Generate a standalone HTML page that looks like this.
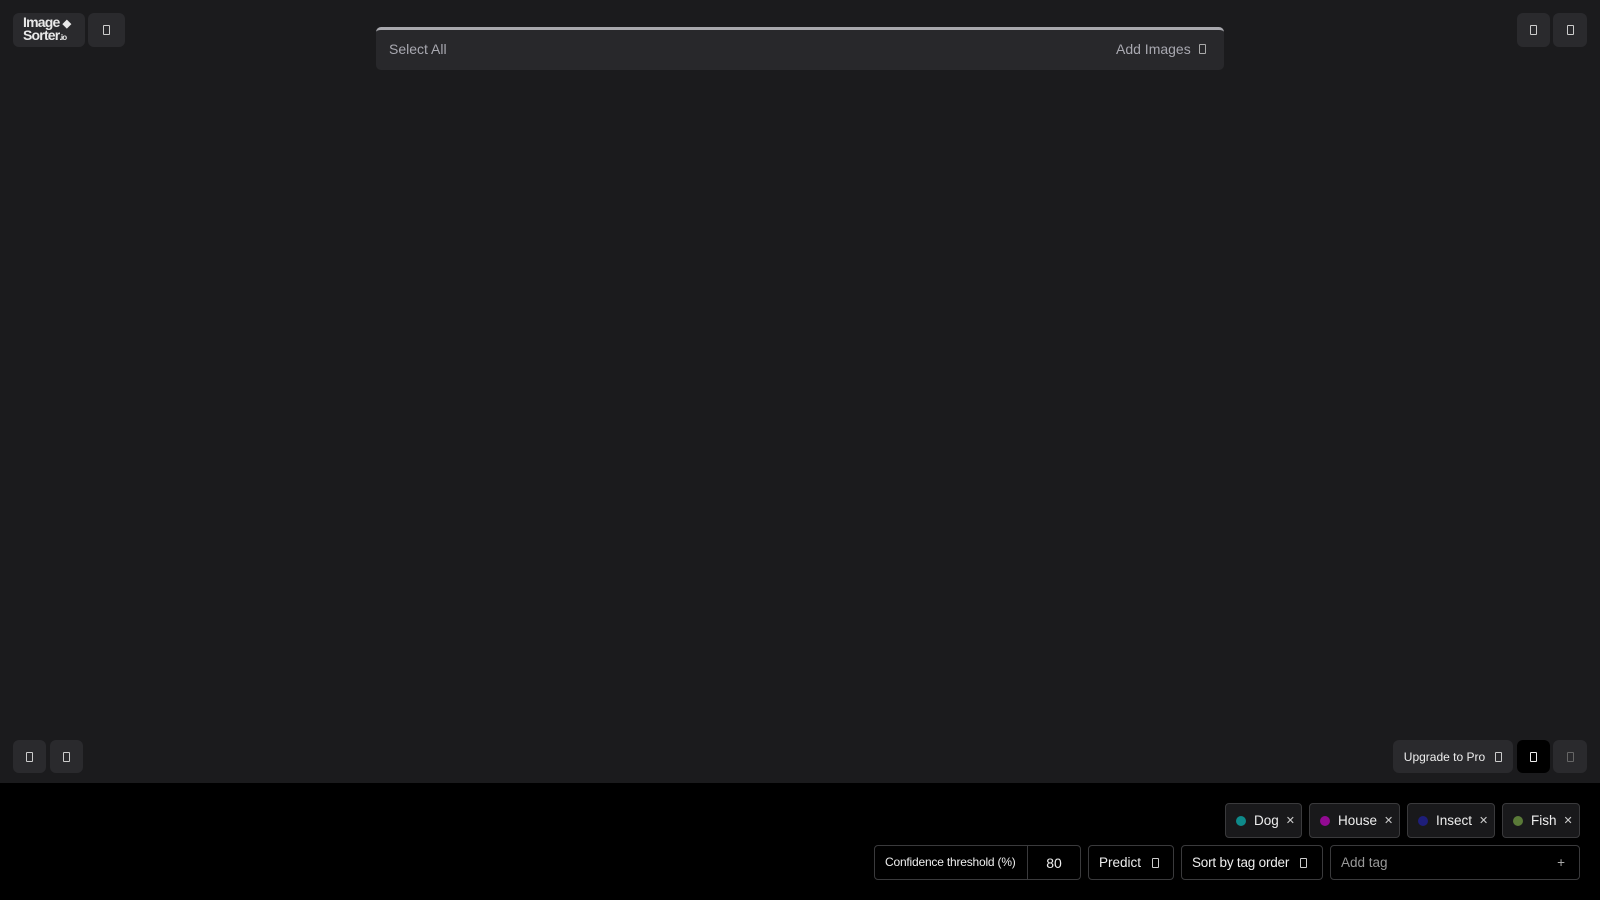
<!DOCTYPE html><html><head><style>
*{box-sizing:border-box;margin:0;padding:0}
body{width:1600px;height:900px;background:#000;font-family:"Liberation Sans",sans-serif;position:relative;overflow:hidden}
.main{position:absolute;left:0;top:0;width:1600px;height:783px;background:#1b1b1d}
.a{position:absolute}
.btn{position:absolute;background:#2a2a2d;border-radius:6px;display:flex;align-items:center;justify-content:center}
.ic{display:inline-block;width:7px;height:10px;border:1px solid #ccc;border-radius:1px}
.box{position:absolute;border:1px solid #3a3a3c;border-radius:4px;background:#000;color:#eee;display:flex;align-items:center;font-size:13.5px}
.tag{background:#19191b;padding-left:10px}
.dot{width:10px;height:10px;border-radius:50%;margin-right:8px}
.x{margin-left:7px;font-size:11px;color:#ccc}
</style></head><body>
<div class="main">
<div class="btn" style="left:13px;top:13px;width:72px;height:34px;color:#e8e8e8;font-weight:bold;font-size:14px;line-height:11px;flex-direction:column;letter-spacing:-0.8px;align-items:flex-start;padding-left:10px"><div>Image <span style="font-size:11px">◆</span></div><div>Sorter<span style="font-size:8px">.io</span></div></div>
<div class="btn" style="left:88px;top:13px;width:37px;height:34px"><span class="ic"></span></div>
<div class="a" style="left:376px;top:27px;width:848px;height:43px;background:#28282b;border-top:3px solid #a8a8ad;border-radius:5px"></div>
<div class="a" style="left:389px;top:41px;color:#a8a8b0;font-size:14px">Select All</div>
<div class="a" style="left:1116px;top:41px;color:#a8a8b0;font-size:14px">Add Images</div>
<span class="ic a" style="left:1199px;top:44px;border-color:#aaa"></span>
<div class="btn" style="left:1517px;top:13px;width:33px;height:34px"><span class="ic"></span></div>
<div class="btn" style="left:1553px;top:13px;width:34px;height:34px"><span class="ic"></span></div>
<div class="btn" style="left:13px;top:740px;width:33px;height:33px"><span class="ic"></span></div>
<div class="btn" style="left:50px;top:740px;width:33px;height:33px"><span class="ic"></span></div>
<div class="btn" style="left:1393px;top:740px;width:120px;height:33px;color:#eee;font-size:12px">Upgrade to Pro&nbsp;&nbsp;&nbsp;<span class="ic"></span></div>
<div class="btn" style="left:1517px;top:740px;width:33px;height:33px;background:#000"><span class="ic" style="border-color:#eee"></span></div>
<div class="btn" style="left:1553px;top:740px;width:34px;height:33px"><span class="ic" style="border-color:#666"></span></div>
</div>
<div class="box tag" style="left:1225px;top:803px;width:77px;height:35px"><span class="dot" style="background:#0e8a8a"></span>Dog<span class="x">✕</span></div>
<div class="box tag" style="left:1309px;top:803px;width:91px;height:35px"><span class="dot" style="background:#920a92"></span>House<span class="x">✕</span></div>
<div class="box tag" style="left:1407px;top:803px;width:88px;height:35px"><span class="dot" style="background:#1e1e7a"></span>Insect<span class="x">✕</span></div>
<div class="box tag" style="left:1502px;top:803px;width:78px;height:35px"><span class="dot" style="background:#5a7a38"></span>Fish<span class="x">✕</span></div>
<div class="box" style="left:874px;top:845px;width:207px;height:35px;font-size:12px"><span style="padding-left:10px;width:153px;border-right:1px solid #3a3a3c;line-height:33px;letter-spacing:-0.2px">Confidence threshold (%)</span><span style="flex:1;text-align:center;font-size:14px">80</span></div>
<div class="box" style="left:1088px;top:845px;width:86px;height:35px;padding-left:10px">Predict&nbsp;&nbsp;&nbsp;<span class="ic"></span></div>
<div class="box" style="left:1181px;top:845px;width:142px;height:35px;padding-left:10px;letter-spacing:-0.2px">Sort by tag order&nbsp;&nbsp;&nbsp;<span class="ic"></span></div>
<div class="box" style="left:1330px;top:845px;width:250px;height:35px;padding-left:10px;color:#999">Add tag<span style="margin-left:auto;margin-right:14px;color:#aaa">+</span></div>
</body></html>
